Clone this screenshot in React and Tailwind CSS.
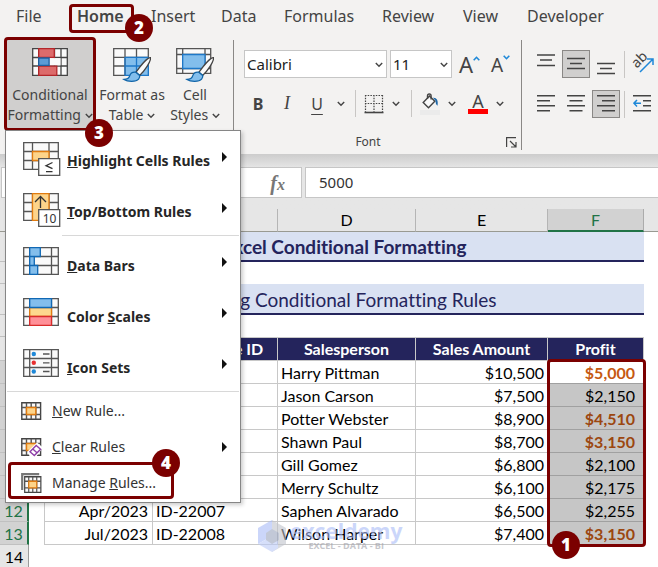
import { useState } from "react";

const tabs = [
  { name: "File", width: "w-[61px]" },
  { name: "Home", width: "w-[74px]" },
  { name: "Insert", width: "w-[70px]" },
  { name: "Data", width: "w-[63px]" },
  { name: "Formulas", width: "w-[98px]" },
  { name: "Review", width: "w-[81px]" },
  { name: "View", width: "w-[64px]" },
  { name: "Developer", width: "w-[90px]" },
];

const rows = [
  { date: "Jan/2023", id: "ID-22001", person: "Harry Pittman", sales: "$10,500", profit: "$5,000", high: true },
  { date: "Feb/2023", id: "ID-22002", person: "Jason Carson", sales: "$7,500", profit: "$2,150" },
  { date: "Feb/2023", id: "ID-22003", person: "Potter Webster", sales: "$8,900", profit: "$4,510", high: true },
  { date: "Mar/2023", id: "ID-22004", person: "Shawn Paul", sales: "$8,700", profit: "$3,150", high: true },
  { date: "Mar/2023", id: "ID-22005", person: "Gill Gomez", sales: "$6,800", profit: "$2,100" },
  { date: "Apr/2023", id: "ID-22006", person: "Merry Schultz", sales: "$6,100", profit: "$2,175" },
  { date: "Apr/2023", id: "ID-22007", person: "Saphen Alvarado", sales: "$6,500", profit: "$2,255" },
  { date: "Jul/2023", id: "ID-22008", person: "Wilson Harper", sales: "$7,400", profit: "$3,150", high: true },
];

function Badge({ children, className }) {
  return (
    <span
      className={`absolute z-30 flex h-7 w-7 items-center justify-center rounded-full bg-[#7b0000] font-['Open_Sans',sans-serif] text-[17px] font-extrabold text-white ${className}`}
    >
      {children}
    </span>
  );
}

function Chevron({ className = "" }) {
  return (
    <svg className={`h-[6px] w-2 shrink-0 ${className}`} viewBox="0 0 8 6" fill="none" stroke="#444" strokeWidth="1.4">
      <path d="M.8 1 4 4.3 7.2 1" />
    </svg>
  );
}

function Divider() {
  return <span className="h-[27px] w-px shrink-0 bg-[#c8c6c4]" />;
}

/* Ribbon icons */

function ConditionalIcon() {
  return (
    <svg className="h-[34px] w-9" viewBox="0 0 36 34" fill="none" strokeWidth="1.3">
      <path d="M.7.7h34.6v26.6H.7z" fill="#fafafa" stroke="#444" />
      <path d="M.7 9.5h34.6M.7 18h34.6M6.7.7v26.6M22.5.7v26.6M29 .7v26.6" stroke="#444" />
      <path d="M17.5 10.1h11v7.3h-11z" fill="#fafafa" />
      <path d="M6.7.7h15.6v8.6H6.7zM6.7 18.2h18.1v9.1H6.7z" fill="#dd6b6b" stroke="#b3262a" />
      <path d="M6.7 10h10.4v7.4H6.7z" fill="#5b9bd5" stroke="#1f5f9f" />
    </svg>
  );
}

function Brush() {
  return (
    <>
      <path d="M37.6 9.6c-3-.6-10.6 8.8-14.6 14.6l3.6 3.2C31.5 23 38 13.5 37.6 9.6z" fill="#fafafa" stroke="#444" />
      <path d="M22.8 24.2c-3.2-.4-5.4 1.3-6.1 3.7-.7 2.3-2.7 3.4-5.7 3.6 3.5 2.3 12 2.6 14.6-.4 1-1.2 1.4-2.5 1.1-3.7z" fill="#83beec" stroke="#0f64a8" />
    </>
  );
}

function FormatTableIcon() {
  return (
    <svg className="h-[34px] w-[38px]" viewBox="0 0 38 34" fill="none" strokeWidth="1.3">
      <path d="M.7.7h34.6v26.6H.7z" fill="#fafafa" stroke="#555" />
      <path d="M12 9h23.3v18.3H12z" fill="#83beec" />
      <path d="M.7 9.3h34.6M.7 18H12M12 .7v26.6M23.5.7V9" stroke="#555" />
      <path d="M12 9.3h23.3M12 18h23.3M12 9v18.3h23.3V9M23.5 9v18" stroke="#1e78c8" />
      <Brush />
    </svg>
  );
}

function CellStylesIcon() {
  return (
    <svg className="h-[34px] w-[38px]" viewBox="0 0 38 34" fill="none" strokeWidth="1.3">
      <path d="M.7.7h34v24.6H.7z" fill="#fafafa" stroke="#555" />
      <path d="M.7 6.5h34M.7 20.5h34M6.7.7v24.6M29 .7v24.6" stroke="#555" />
      <path d="M6.7 6.5H29v14H6.7z" fill="#83beec" stroke="#1e78c8" />
      <Brush />
    </svg>
  );
}

function BordersIcon() {
  return (
    <svg className="h-5 w-5" viewBox="0 0 20 20" fill="none" stroke="#444">
      <path d="M1 1.5h18M1 9.5h18M1.5 1v17M10 1v17M18.5 1v17" strokeWidth="1.2" strokeDasharray="1.5 1.2" />
      <path d="M.5 18.5h19" strokeWidth="1.6" />
    </svg>
  );
}

function BucketIcon() {
  return (
    <svg className="h-[22px] w-5" viewBox="0 0 20 22" fill="none" strokeWidth="1.4">
      <path d="M9.5 3 3.2 9.5l5.3 5.2 6.3-6.4z" fill="#fafafa" stroke="#444" />
      <path d="M7.5 6V3c0-2.6 3.6-2.6 3.6 0v3.5" stroke="#444" />
      <path d="M13 4.7c3.5-.4 5.5 2.3 4.5 8-1.6-1-1.8-3-2-5z" fill="#1e68a8" />
      <path d="M0 17h20v5H0z" fill="#ebebeb" />
    </svg>
  );
}

function FontSizeIcon({ down }) {
  return (
    <span className="flex items-start text-[#444]">
      <span className={down ? "pt-0.5 text-[19px] leading-5" : "text-[22px] leading-5"}>A</span>
      <svg className="mt-0.5 h-[5px] w-[7px]" viewBox="0 0 7 5" fill="none" stroke="#1e88d8" strokeWidth="1.6">
        <path d={down ? "M.7.7 3.5 3.7 6.3.7" : "M.7 4.3 3.5 1.3 6.3 4.3"} />
      </svg>
    </span>
  );
}

function LinesIcon({ d }) {
  return (
    <svg className="h-[26px] w-[18px]" viewBox="0 0 18 26" fill="none" stroke="#444" strokeWidth="1.5">
      <path d={d} />
    </svg>
  );
}

function OrientationIcon() {
  return (
    <svg className="h-[22px] w-[22px] overflow-visible" viewBox="0 0 22 22" fill="none">
      <text
        transform="translate(9.5 10) rotate(-45)"
        textAnchor="middle"
        fontSize="14"
        fill="#444"
        fontFamily="Noto Sans, sans-serif"
      >
        ab
      </text>
      <path d="M7 19 19.5 6.5M14 6H20V12" stroke="#1e88d8" strokeWidth="1.5" />
    </svg>
  );
}

function IndentIcon() {
  return (
    <svg className="h-[26px] w-[18px]" viewBox="0 0 18 26" fill="none" strokeWidth="1.5">
      <path d="M0 4.7h18M10 9.7h8M10 14.7h8M0 19.7h18" stroke="#444" />
      <path d="M8 12.2H1M4 9 .9 12.2 4 15.4" stroke="#1e88d8" />
    </svg>
  );
}

function ToolButton({ active, label, children }) {
  return (
    <button
      aria-label={label}
      className={`flex h-7 w-7 shrink-0 items-center justify-center border ${
        active ? "border-[#8a8886] bg-[#d0cfce]" : "border-transparent"
      }`}
    >
      {children}
    </button>
  );
}

/* Menu icons */

function GridIcon({ lines, children }) {
  return (
    <svg className="h-[34px] w-[38px] shrink-0" viewBox="0 0 38 34" fill="none" strokeWidth="1.3">
      <path d="M.7.7h34.6v26.6H.7z" fill="#fafafa" stroke="#555" />
      <path d={lines} stroke="#555" />
      {children}
    </svg>
  );
}

function HighlightIcon() {
  return (
    <GridIcon lines="M.7 9.5h34.6M.7 18.5h34.6M9.5.7v26.6M26 .7v26.6">
      <path d="M9.5 9.5H26v9H9.5z" fill="#fdd48a" stroke="#e07b10" />
      <path d="M15.7 16.7h21v16.6h-21z" fill="#fff" stroke="#555" />
      <path d="M29.5 20.5 23 23.7l6.5 3M23 29.7h6.5" stroke="#333" />
    </GridIcon>
  );
}

function TopBottomIcon() {
  return (
    <GridIcon lines="M.7 9.5h34.6M.7 18.5h34.6M9.5.7v26.6M26 .7v26.6">
      <path d="M9.5.7H26v26.6H9.5z" fill="#fdd48a" stroke="#e07b10" />
      <path d="M17.5 15V3.5M12 9l5.5-5.5L23 9" stroke="#333" />
      <path d="M15.7 16.7h21v16.6h-21z" fill="#fff" stroke="#555" />
      <text x="26.5" y="29.5" textAnchor="middle" fontSize="12" fontWeight="400" fill="#333" fontFamily="Noto Sans, sans-serif">10</text>
    </GridIcon>
  );
}

function DataBarsIcon() {
  return (
    <GridIcon lines="M.7 9.5h34.6M.7 18.5h34.6M6.7.7v26.6M28.5.7v26.6">
      <path d="M6.7.7h10.6v8.8H6.7zM6.7 9.5h4.6v9H6.7zM6.7 18.5h8v8.8h-8z" fill="#83beec" stroke="#1068b4" />
    </GridIcon>
  );
}

function ColorScalesIcon() {
  return (
    <GridIcon lines="M.7 9.5h34.6M.7 18.5h34.6M6.7.7v26.6M28.5.7v26.6">
      <path d="M6.7 9.5h21.8v9H6.7z" fill="#fdd88e" stroke="#e07b10" />
      <path d="M6.7.7h21.8v8.8H6.7z" fill="#83beec" stroke="#1068b4" />
      <path d="M6.7 18.5h21.8v8.8H6.7z" fill="#ff9098" stroke="#d92b2b" />
    </GridIcon>
  );
}

function IconSetsIcon() {
  return (
    <GridIcon lines="M.7 9.5h34.6M.7 18.5h34.6M6.7.7v26.6M28.5.7v26.6">
      <circle cx="10.8" cy="5" r="2.2" fill="#1e88d8" />
      <circle cx="10.8" cy="13.8" r="2.2" fill="#e83030" />
      <circle cx="10.8" cy="22.5" r="2.2" fill="#1e88d8" />
      <path d="M20 5h6.5M20 13.8h6.5M20 22.5h6.5" stroke="#555" />
    </GridIcon>
  );
}

function SmallGridIcon({ variant }) {
  return (
    <svg className="h-5 w-[21px] shrink-0" viewBox="0 0 21 20" fill="none" strokeWidth="1.4">
      {variant === "manage" && <path d="M1.2 17V1.2h17" stroke="#777" strokeWidth="2.2" />}
      <g transform={variant === "manage" ? "translate(3 3) scale(.86 .95)" : "translate(0 1)"}>
        <path d="M.8.8h18.8v16.4H.8z" fill="#fafafa" stroke="#444" />
        <path d="M.8 5.5h18.8M.8 12.5h18.8M5.5.8v16.4M14.8.8v16.4M10.2.8v16.4" stroke="#555" />
        <path d="M5.5 5.5h9.3v7H5.5z" fill="#fdd48a" stroke="#e07b10" />
      </g>
      {variant === "clear" && (
        <>
          <path d="M6.5 14.5 16 5.5l6 5-7 9.5H9z" fill="#fff" />
          <path d="m9 14.8 6.200-6.300 4.400 3.700-6.300 6.400zM11.800 12l4.400 4" fill="#fff" stroke="#8e3fa8" />
        </>
      )}
    </svg>
  );
}

function SubmenuArrow({ className = "" }) {
  return (
    <svg className={`ml-auto h-[10px] w-[5px] ${className}`} viewBox="0 0 5 10">
      <path d="M0 0 5 5 0 10z" fill="#111" />
    </svg>
  );
}

function LargeItem({ icon, children }) {
  return (
    <button role="menuitem" className="flex h-[51px] w-full items-center pr-[13px] pl-[17px] text-[14px] font-bold text-[#262626]">
      {icon}
      <span className="mt-1 ml-1.5 whitespace-pre">{children}</span>
      <SubmenuArrow className="mb-1" />
    </button>
  );
}

function SmallItem({ variant, arrow, children }) {
  return (
    <button role="menuitem" className="flex h-9 w-full items-center pr-[13px] pl-[15px] text-[14px] text-[#333]">
      <SmallGridIcon variant={variant} />
      <span className="ml-2.5 whitespace-pre">{children}</span>
      {arrow && <SubmenuArrow />}
    </button>
  );
}

function Menu() {
  return (
    <div
      role="menu"
      className="absolute top-[93px] left-px z-20 w-[236px] border border-[#868686] bg-white pt-0.5 pb-px shadow-[2px_2px_4px_rgba(0,0,0,0.2)]"
    >
      <LargeItem icon={<HighlightIcon />}><u>H</u>ighlight Cells Rules</LargeItem>
      <LargeItem icon={<TopBottomIcon />}><u>T</u>op/Bottom Rules</LargeItem>
      <hr className="mr-px mb-0.5 ml-14 border-[#d8d8d8]" />
      <LargeItem icon={<DataBarsIcon />}><u>D</u>ata Bars</LargeItem>
      <LargeItem icon={<ColorScalesIcon />}>Color <u>S</u>cales</LargeItem>
      <LargeItem icon={<IconSetsIcon />}><u>I</u>con Sets</LargeItem>
      <hr className="mx-px mb-px border-[#d8d8d8]" />
      <SmallItem><u>N</u>ew Rule...</SmallItem>
      <SmallItem variant="clear" arrow><u>C</u>lear Rules</SmallItem>
      <div className="relative">
        <SmallItem variant="manage">Manage <u>R</u>ules...</SmallItem>
        <span className="pointer-events-none absolute top-[-3px] left-0.5 h-[37px] w-[166px] rounded border-[3px] border-[#7b0000]" />
        <Badge className="-top-4 left-[146px]">4</Badge>
      </div>
    </div>
  );
}

function Ribbon() {
  const [open, setOpen] = useState(true);

  return (
    <div className="flex h-[118px] pl-1 text-[14px] text-[#444]">
      {/* Styles */}
      <div className="mt-px flex w-[229px] shrink-0 items-start leading-5">
        <div className="relative">
          <button
            onClick={() => setOpen(!open)}
            className="flex h-[94px] w-[92px] flex-col items-center gap-[3px] rounded border-[3px] border-[#7b0000] bg-[#d0cfce] pt-2 whitespace-nowrap"
          >
            <ConditionalIcon />
            <span>Conditional<br />Formatting <Chevron className="inline" /></span>
          </button>
          {open && <Menu />}
          <Badge className="top-[82px] left-[81px]">3</Badge>
        </div>
        <button className="flex w-[72px] flex-col items-center gap-[3px] pt-[11px] whitespace-nowrap">
          <FormatTableIcon />
          <span>Format as<br />Table <Chevron className="inline" /></span>
        </button>
        <button className="flex w-[54px] flex-col items-center gap-[3px] pt-[11px] whitespace-nowrap">
          <CellStylesIcon />
          <span>Cell<br />Styles <Chevron className="inline" /></span>
        </button>
      </div>

      {/* Font */}
      <div className="mt-1 mb-1 flex w-[289px] shrink-0 flex-col border-x border-[#8a8886] pt-2.5 pl-2.5">
        <div className="flex h-7 items-center">
          <div className="relative mr-[3px]">
            <select aria-label="Font name" className="h-7 w-[143px] appearance-none border border-[#c6c6c6] bg-white pl-0.5 text-[15px] text-[#222]">
              <option>Calibri</option>
            </select>
            <Chevron className="absolute top-3 right-1" />
          </div>
          <div className="relative mr-[7px]">
            <select aria-label="Font size" className="h-7 w-[62px] appearance-none border border-[#c6c6c6] bg-white pl-0.5 text-[15px] text-[#222]">
              <option>11</option>
            </select>
            <Chevron className="absolute top-3 right-1" />
          </div>
          <button aria-label="Increase font size" className="w-8"><FontSizeIcon /></button>
          <button aria-label="Decrease font size"><FontSizeIcon down /></button>
        </div>
        <div className="mt-3 flex h-7 items-center">
          <button className="w-7 text-[16px] font-bold">B</button>
          <button className="w-[30px] font-['Liberation_Serif',serif] text-[18px] italic">I</button>
          <button className="w-[30px] text-[16px] underline underline-offset-4">U</button>
          <Chevron className="mr-2.5 ml-[5px]" />
          <Divider />
          <button aria-label="Borders" className="mr-2 ml-2"><BordersIcon /></button>
          <Chevron className="mr-[11px]" />
          <Divider />
          <button aria-label="Fill color" className="mr-2 ml-2"><BucketIcon /></button>
          <Chevron className="mr-3" />
          <button className="mr-2 flex h-5 w-5 items-center justify-center border-b-[5px] border-[#ff0000] text-[18px]">A</button>
          <Chevron />
        </div>
        <div className="mt-4 flex h-5 items-center text-[12px]">
          <span className="flex-1 pr-3.5 text-center">Font</span>
          <svg className="mr-1 h-[11px] w-[11px]" viewBox="0 0 11 11" fill="none" stroke="#444" strokeWidth="1.2">
            <path d="M.6 10V.6H10M4 4l5.5 5.5M10 5v5H5" />
          </svg>
        </div>
      </div>

      {/* Alignment */}
      <div className="flex flex-col gap-3 pt-3.5 pl-2.5">
        <div className="flex items-center gap-0.5">
          <ToolButton label="Top align"><LinesIcon d="M0 4h18M3 9h12M0 14.5h18" /></ToolButton>
          <ToolButton label="Middle align" active><LinesIcon d="M0 7.5h18M3 12.5h12M0 17.5h18" /></ToolButton>
          <ToolButton label="Bottom align"><LinesIcon d="M0 12.5h18M3 17.5h12M0 22.5h18" /></ToolButton>
          <span className="mr-1.5 ml-0.5 h-[27px] w-px shrink-0 bg-[#c8c6c4]" />
          <button aria-label="Orientation" className="shrink-0"><OrientationIcon /></button>
        </div>
        <div className="flex items-center gap-0.5">
          <ToolButton label="Align left"><LinesIcon d="M0 4.7h18M0 9.7h13M0 14.7h18M0 19.7h13" /></ToolButton>
          <ToolButton label="Center"><LinesIcon d="M0 4.7h18M2.5 9.7h13M0 14.7h18M2.5 19.7h13" /></ToolButton>
          <ToolButton label="Align right" active><LinesIcon d="M0 4.7h18M5 9.7h13M0 14.7h18M5 19.7h13" /></ToolButton>
          <span className="mr-1.5 ml-0.5 h-[27px] w-px shrink-0 bg-[#c8c6c4]" />
          <button aria-label="Decrease indent" className="shrink-0"><IndentIcon /></button>
        </div>
      </div>
    </div>
  );
}

function RowHeader({ n, selected }) {
  return (
    <th
      scope="row"
      className={`border-b border-[#c0c0c0] p-0 pt-px font-normal ${
        selected ? "border-r-2 border-r-[#217346] bg-[#d2d2d2] text-[#217346]" : "border-r border-r-[#9b9b9b] bg-[#e6e6e6] text-black"
      }`}
    >
      {n}
    </th>
  );
}

function Sheet() {
  const cell = "border-r border-b border-[#c8c8c8] p-0 pt-0.5";
  const head = "border-r border-y border-[#c8c8c8] bg-[#24245c] p-0 font-bold text-white";

  return (
    <div className="relative">
      <table className="w-full table-fixed border-separate border-spacing-0 bg-white font-[Lato,sans-serif] text-[16px] leading-5 whitespace-nowrap [font-variant-ligatures:none]">
        <colgroup>
          <col className="w-[29px]" />
          <col className="w-4" />
          <col className="w-[108px]" />
          <col className="w-[125px]" />
          <col className="w-[138px]" />
          <col className="w-[132px]" />
          <col className="w-24" />
          <col />
        </colgroup>
        <thead>
          <tr className="h-[23px] bg-[#e6e6e6]">
            {["", "A", "B", "C", "D", "E"].map((c) => (
              <th key={c} scope="col" className="overflow-hidden border-r border-b border-r-[#b5b5b5] border-b-[#999a92] p-0 font-normal">
                {c}
              </th>
            ))}
            <th scope="col" className="border-r border-b-2 border-r-[#ababab] border-b-[#217346] bg-[#d2d2d2] p-0 font-normal text-[#217346]">F</th>
            <th className="border-b border-[#999a92] p-0" />
          </tr>
        </thead>
        <tbody>
          <tr className="h-[30px]">
            <RowHeader n={2} />
            <td />
            <td colSpan={5} className="border-b-2 border-[#24245c] bg-[#d9e1f2] p-0 pt-0.5 text-center text-[19px] font-bold text-[#24245c]">
              Excel Conditional Formatting
            </td>
            <td />
          </tr>
          <tr className="h-[22px]"><RowHeader n={3} /><td colSpan={7} className="p-0" /></tr>
          <tr className="h-[31px]">
            <RowHeader n={4} />
            <td />
            <td colSpan={5} className="border-b-2 border-[#24245c] bg-[#d9e1f2] p-0 pt-0.5 text-center text-[19px] text-[#24245c]">
              Editing Conditional Formatting Rules
            </td>
            <td />
          </tr>
          <tr className="h-[22px]"><RowHeader n={5} /><td colSpan={7} className="p-0" /></tr>
          <tr className="h-6">
            <RowHeader n={6} />
            <td className="border-r border-[#c8c8c8]" />
            <th className={head}>Date</th>
            <th className={`${head} pl-1`}>Reference ID</th>
            <th className={head}>Salesperson</th>
            <th className={head}>Sales Amount</th>
            <th className={head}>Profit</th>
            <td />
          </tr>
          {rows.map((row, i) => (
            <tr key={row.id} className="h-[23px]">
              <RowHeader n={i + 6} selected />
              <td className="border-r border-[#c8c8c8] p-0" />
              <td className={`${cell} pr-1 text-right`}>{row.date}</td>
              <td className={`${cell} pl-[3px]`}>{row.id}</td>
              <td className={`${cell} pl-[3px]`}>{row.person}</td>
              <td className={`${cell} pr-[3px] text-right`}>{row.sales}</td>
              <td
                className={`relative border-b border-[#a0a0a0] p-0 pt-0.5 pr-[9px] text-right ${i === 0 ? "bg-white" : "bg-[#c6c6c6]"} ${
                  row.high ? (i === 0 ? "font-bold text-[#c65911]" : "font-bold text-[#9c4710]") : ""
                }`}
              >
                {row.profit}
                {i === 0 && (
                  <span className="pointer-events-none absolute -top-0.5 -left-px z-10 h-[188px] w-[99px] rounded border-[3px] border-[#7b0000]" />
                )}
                {i === rows.length - 1 && <Badge className="top-[9px] left-1">1</Badge>}
              </td>
              <td className="p-0" />
            </tr>
          ))}
          <tr className="h-[23px]"><RowHeader n={14} /><td colSpan={7} className="p-0" /></tr>
        </tbody>
      </table>

      {/* Watermark */}
      <div className="pointer-events-none absolute top-[311px] left-[258px] flex items-center gap-1 opacity-60">
        <svg className="h-8 w-7" viewBox="0 0 28 32">
          <path d="M14 0 28 8v16l-14 8z" fill="#c0c4cc" />
          <path d="M14 0 0 8v16l14-8z" fill="#a9bcf8" />
          <path d="M14 16 0 24l14 8 6-4V12z" fill="#bccaf8" />
          <path d="m14 9 7 4v7l-7 4-6-4v-7z" fill="#9aa5bd" />
        </svg>
        <div className="flex flex-col items-center font-['Open_Sans',sans-serif] font-bold">
          <span className="text-[21px] leading-5 text-[#a9bcf8]">exceldemy</span>
          <span className="text-[9px] leading-[10px] text-[#a0a0a8]">EXCEL - DATA - BI</span>
        </div>
      </div>
    </div>
  );
}

export default function App() {
  const [active, setActive] = useState("Home");

  return (
    <div className="min-h-screen overflow-hidden bg-white font-['Noto_Sans',sans-serif]">
      <div className="bg-[#f3f2f1]">
        <nav className="flex h-9 pl-4 text-[16px] text-[#444]">
          {tabs.map((tab) => (
            <div key={tab.name} className={`relative shrink-0 ${tab.width}`}>
              <button
                onClick={() => setActive(tab.name)}
                className={`h-8 ${active === tab.name ? "font-semibold" : ""}`}
              >
                {tab.name}
              </button>
              {tab.name === "Home" && (
                <>
                  <span className="pointer-events-none absolute top-1 -left-2 h-[29px] w-[65px] rounded border-[3px] border-[#7b0000]" />
                  <Badge className="top-3.5 left-12">2</Badge>
                </>
              )}
            </div>
          ))}
        </nav>
        <Ribbon />
      </div>

      {/* Formula bar */}
      <div className="bg-[#e6e6e6] bg-linear-to-b from-[#cccccc] to-[#e6e6e6] to-25% pt-[13px] pb-[11px] pl-px">
        <div className="flex h-[31px] text-[15px] text-[#333]">
          <input aria-label="Name box" defaultValue="F6" className="w-[150px] border border-[#c6c6c6] bg-white pl-2" />
          <div className="ml-1 flex w-[147px] items-center justify-end border border-[#c6c6c6] bg-white pr-4">
            <button aria-label="Insert function" className="font-['Liberation_Serif',serif] text-[20px] font-bold text-[#777] italic">
              f<span className="text-[16px]">x</span>
            </button>
          </div>
          <input aria-label="Formula" defaultValue="5000" className="ml-[3px] min-w-0 flex-1 border-y border-l border-[#c6c6c6] bg-white pl-[13px]" />
        </div>
      </div>

      <Sheet />
    </div>
  );
}
